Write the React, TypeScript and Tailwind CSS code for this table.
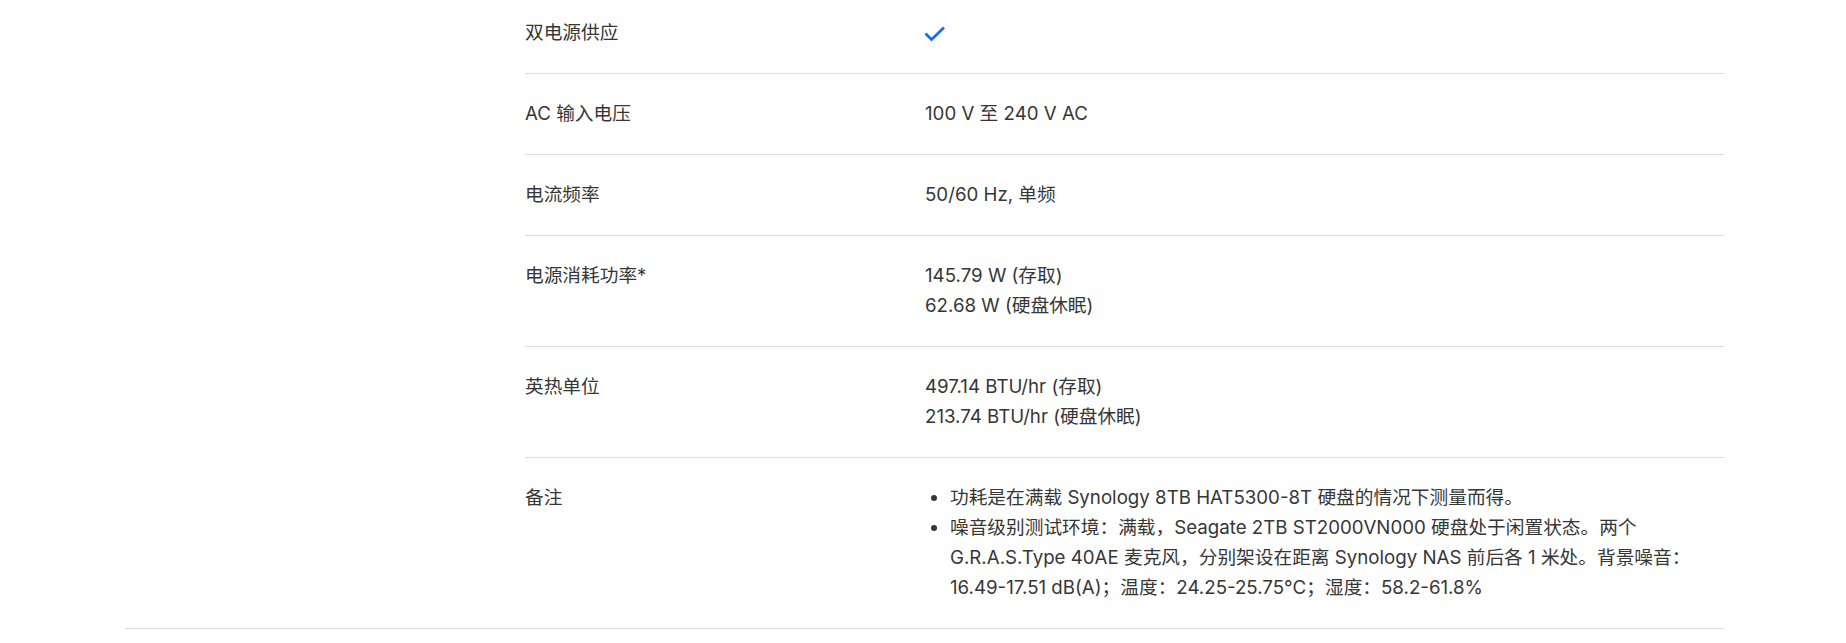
import type { ReactNode } from 'react'

type Spec = {
  label: string
  value: ReactNode
}

function CheckMark() {
  return (
    <div className="flex h-[30px] items-center">
      <svg width="22" height="16" viewBox="0 0 22 16" className="ml-[-1px] mt-[2px]">
        <polyline
          points="1.5,7.5 7.5,13.5 20,1.5"
          fill="none"
          stroke="#1a6fe0"
          strokeWidth="2.7"
        />
      </svg>
    </div>
  )
}

const specs: Spec[] = [
  { label: '双电源供应', value: <CheckMark /> },
  { label: 'AC 输入电压', value: '100 V 至 240 V AC' },
  { label: '电流频率', value: '50/60 Hz, 单频' },
  {
    label: '电源消耗功率*',
    value: (
      <>
        <p>145.79 W (存取)</p>
        <p>62.68 W (硬盘休眠)</p>
      </>
    ),
  },
  {
    label: '英热单位',
    value: (
      <>
        <p>497.14 BTU/hr (存取)</p>
        <p>213.74 BTU/hr (硬盘休眠)</p>
      </>
    ),
  },
  {
    label: '备注',
    value: (
      <ul className="list-disc pl-[25px]">
        <li>功耗是在满载 Synology 8TB HAT5300-8T 硬盘的情况下测量而得。</li>
        <li>
          噪音级别测试环境：满载，Seagate 2TB ST2000VN000 硬盘处于闲置状态。两个
          <br />
          G.R.A.S.Type 40AE 麦克风，分别架设在距离 Synology NAS 前后各 1 米处。背景噪音：
          <br />
          16.49-17.51 dB(A)；温度：24.25-25.75°C；湿度：58.2-61.8%
        </li>
      </ul>
    ),
  },
]

export default function App() {
  return (
    <div
      className="min-h-screen bg-white text-[18.7px] leading-[30px] text-[#363636]"
      style={{ fontFamily: 'Inter, "Noto Sans CJK SC", sans-serif' }}
    >
      {/* page is scrolled: first row starts just above the viewport */}
      <section className="-mt-[7px] ml-[125px] flex w-[1599px] border-b border-[#dcdcdc]">
        <div className="w-[400px] shrink-0" />
        <div className="flex-1">
          {specs.map((s, i) => (
            <div
              key={s.label}
              className={`flex py-[25px] ${
                i < specs.length - 1 ? 'border-b border-[#dcdcdc]' : ''
              }`}
            >
              <div className="w-[400px] shrink-0">{s.label}</div>
              <div className="flex-1">{s.value}</div>
            </div>
          ))}
        </div>
      </section>
    </div>
  )
}
